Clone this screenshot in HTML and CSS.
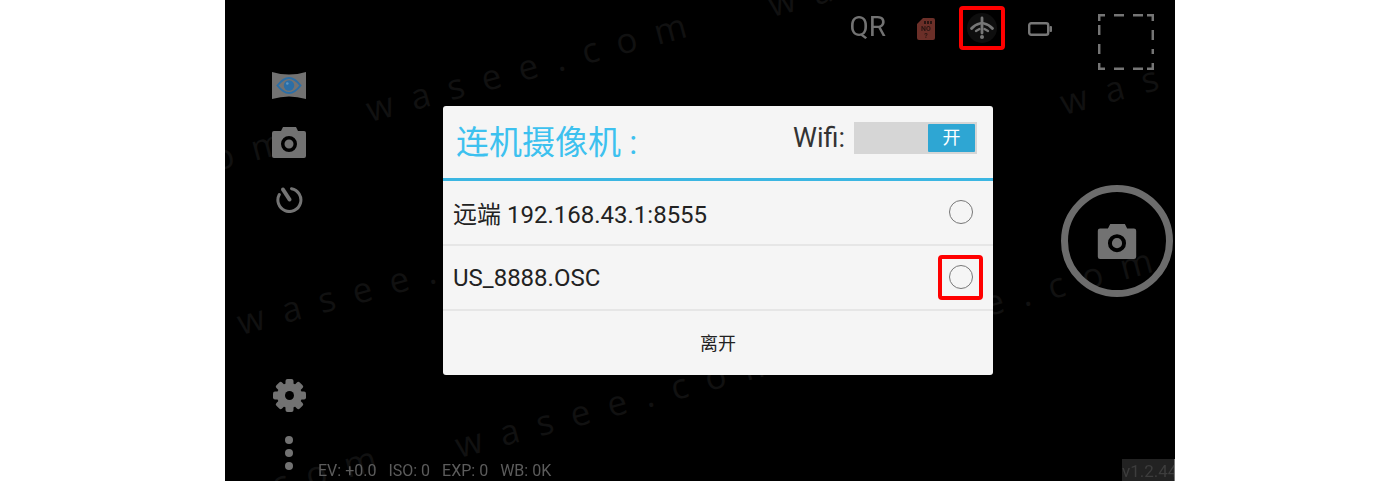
FILE: index.html
```html
<!DOCTYPE html>
<html lang="zh">
<head>
<meta charset="utf-8">
<title>连机摄像机</title>
<link rel="stylesheet" href="styles.css">
</head>
<body>
<div class="screen">
  <span class="wm wm1">wasee.com</span>
  <span class="wm wm2">wasee.com</span>
  <span class="wm wm3">wasee.com</span>
  <span class="wm wm4">wasee.com</span>
  <span class="wm wm5">wasee.com</span>
  <span class="wm wm6">wasee.com</span>
  <span class="wm wm7">wasee.com</span>
  <span class="wm wm8">wasee.com</span>

  <div class="hud">
    <aside class="rail">
      <div class="rail-group">
        <svg class="ic-eye" width="34" height="27" viewBox="0 0 34 27">
          <path fill="#727272" d="M0 0Q17 5 34 0V27Q17 22 0 27Z"/>
          <path fill="none" stroke="#2b6ea6" stroke-width="2" d="M5.500 13.500Q17 -1.500 28.500 13.500Q17 28.500 5.500 13.500Z"/>
          <circle cx="17" cy="13.500" r="5.200" fill="#2b6ea6"/>
          <circle cx="15.300" cy="11.500" r="1.300" fill="#5b93c0"/>
        </svg>
        <svg class="ic-cam" width="34" height="31" viewBox="0 0 34 31">
          <path fill="#727272" fill-rule="evenodd" d="M2 4H9L11 0H24L26 4H32Q34 4 34 6V29Q34 31 32 31H2Q0 31 0 29V6Q0 4 2 4ZM17 9A8 8 0 1 0 17 25A8 8 0 1 0 17 9ZM17 12.500A4.500 4.500 0 1 1 17 21.500A4.500 4.500 0 1 1 17 12.500Z"/>
        </svg>
        <svg class="ic-timer" width="27" height="27" viewBox="0 0 27 27">
          <path fill="none" stroke="#747474" stroke-width="3" stroke-linecap="round" d="M15.500 2.700A11.500 11.500 0 1 1 3.300 8.500"/>
          <path fill="none" stroke="#747474" stroke-width="4" stroke-linecap="round" d="M7 3.500L13.500 13.500"/>
        </svg>
      </div>
      <div class="rail-group rail-low">
        <svg class="ic-gear" width="33" height="33" viewBox="0 0 33 33">
          <g fill="#727272">
            <rect x="12.500" y="0" width="8" height="33" rx="2"/>
            <rect x="12.500" y="0" width="8" height="33" rx="2" transform="rotate(45 16.500 16.500)"/>
            <rect x="12.500" y="0" width="8" height="33" rx="2" transform="rotate(90 16.500 16.500)"/>
            <rect x="12.500" y="0" width="8" height="33" rx="2" transform="rotate(135 16.500 16.500)"/>
            <circle cx="16.500" cy="16.500" r="12.500"/>
          </g>
          <circle cx="16.500" cy="16.500" r="4.500" fill="#000"/>
        </svg>
        <div class="dots"><i></i><i></i><i></i></div>
      </div>
    </aside>

    <main class="main">
      <header class="topbar">
        <span class="qr">QR</span>
        <span class="halo-sim">
          <svg width="18" height="22" viewBox="0 0 18 22">
            <path fill="#6b2f28" d="M6 0H16Q18 0 18 2V20Q18 22 16 22H2Q0 22 0 20V6Z"/>
            <g fill="#2a1512"><rect x="7" y="3" width="2" height="3"/><rect x="10" y="3" width="2" height="3"/><rect x="13" y="3" width="2" height="3"/></g>
            <text class="sim-text" x="9" y="13">NO</text>
            <text class="sim-text" x="9" y="20">?</text>
          </svg>
        </span>
        <span class="alert-frame">
          <svg class="soft" width="30" height="30" viewBox="0 0 30 30">
            <circle cx="15" cy="15" r="15" fill="#0e0e0e"/>
            <path fill="none" stroke="#767676" stroke-width="2.800" stroke-linecap="round" d="M15 5V20"/>
            <path fill="none" stroke="#767676" stroke-width="2.800" stroke-linecap="round" d="M4.500 15.500Q8 11.500 13 10.500M25.500 15.500Q22 11.500 17 10.500"/>
            <path fill="none" stroke="#767676" stroke-width="2.400" stroke-linecap="round" d="M9 18L12.500 16M21 18L17.500 16"/>
            <circle cx="15" cy="24" r="2" fill="#767676"/>
          </svg>
        </span>
        <svg class="battery" width="24" height="14" viewBox="0 0 24 14">
          <rect x="1.200" y="1.200" width="19" height="11.600" rx="2" fill="none" stroke="#767676" stroke-width="2.400"/>
          <rect x="21.500" y="4" width="2.500" height="6" rx="1" fill="#767676"/>
        </svg>
        <svg class="frame-btn" width="56" height="56" viewBox="0 0 56 56">
          <path fill="none" stroke="#757575" stroke-width="2.500" d="M1.200 7V1.200H7M16 1.200H26M35 1.200H45M49 1.200H54.800V7M54.800 16V26M54.800 35V40M54.800 49V54.800H49M45 54.800H35M26 54.800H16M7 54.800H1.200V49M1.200 40V30M1.200 21V11"/>
        </svg>
      </header>

      <div class="mid">
        <button class="shutter" type="button" aria-label="拍照">
          <svg width="40" height="35" viewBox="0 0 34 31">
            <path fill="#727272" fill-rule="evenodd" d="M2 4H9L11 0H24L26 4H32Q34 4 34 6V29Q34 31 32 31H2Q0 31 0 29V6Q0 4 2 4ZM17 9A8 8 0 1 0 17 25A8 8 0 1 0 17 9ZM17 12.500A4.500 4.500 0 1 1 17 21.500A4.500 4.500 0 1 1 17 12.500Z"/>
          </svg>
        </button>
      </div>

      <footer class="status">
        <div class="readouts">
          <span>EV: +0.0</span><span>ISO: 0</span><span>EXP: 0</span><span>WB: 0K</span>
        </div>
        <span class="version">v1.2.44</span>
      </footer>
    </main>
  </div>

  <section class="dialog">
    <div class="dialog-head">
      <h1 class="dialog-title">连机摄像机 :</h1>
      <span class="wifi-label">Wifi:</span>
      <div class="toggle"><span class="toggle-thumb">开</span></div>
    </div>
    <div class="row">
      <span class="row-label">远端 192.168.43.1:8555</span>
      <span class="radio-slot"><i class="radio"></i></span>
    </div>
    <div class="row">
      <span class="row-label row-label-low">US_8888.OSC</span>
      <span class="radio-slot radio-slot-marked"><i class="radio"></i></span>
    </div>
    <div class="dialog-foot">离开</div>
  </section>
</div>
</body>
</html>
```

FILE: styles.css
```css
* { box-sizing: border-box; }

html, body {
  margin: 0;
  height: 100%;
  background: #fff;
  overflow: hidden;
}

body {
  font-family: Roboto, "Noto Sans CJK SC", sans-serif;
}

.screen {
  position: relative;
  width: 950px;
  height: 481px;
  margin-left: 225px;
  background: #000;
  overflow: hidden;
}

/* watermark text on the preview */
.wm {
  position: absolute;
  font-family: "Open Sans", sans-serif;
  font-size: 35px;
  line-height: 1;
  letter-spacing: 18.500px;
  color: #111;
  white-space: nowrap;
  transform: rotate(-15deg);
  transform-origin: 0 100%;
}
.wm1 { left: 146px; top: 91px; }
.wm2 { left: 17px; top: 304px; }
.wm3 { left: 235px; top: 427px; }
.wm4 { left: 548px; top: -14px; }
.wm5 { left: 840px; top: 84px; }
.wm6 { left: -257px; top: 207px; }
.wm7 { left: 612px; top: 326px; }
.wm8 { left: -164px; top: 524px; }

/* the photographed screen is slightly soft */
.rail svg,
.battery,
.frame-btn,
.halo-sim,
.soft,
.shutter,
.qr,
.readouts,
.version {
  filter: blur(0.4px);
}

.hud {
  position: absolute;
  inset: 0;
  display: flex;
}

/* left rail */
.rail {
  width: 93px;
  flex: none;
  padding: 72px 12px 11px 47px;
  display: flex;
  flex-direction: column;
  justify-content: space-between;
  align-items: center;
}
.rail-group {
  display: flex;
  flex-direction: column;
  align-items: center;
  gap: 28px;
}
.rail-group svg { display: block; }
.rail-low { gap: 24px; }

.dots {
  display: flex;
  flex-direction: column;
  gap: 5px;
}
.dots i {
  display: block;
  width: 8px;
  height: 8px;
  border-radius: 50%;
  background: #727272;
}

/* main column */
.main {
  flex: 1;
  min-width: 0;
  display: flex;
  flex-direction: column;
}

.topbar {
  height: 70px;
  flex: none;
  display: flex;
  align-items: flex-start;
  padding-right: 21px;
  justify-content: flex-end;
}
.qr {
  margin-top: 11px;
  font-size: 28px;
  line-height: 32px;
  color: #727272;
}
.halo-sim {
  margin: 18px 0 0 31px;
  width: 18px;
  height: 22px;
  display: block;
}
.halo-sim svg { display: block; }
.sim-text {
  font-family: Roboto, sans-serif;
  font-size: 7px;
  font-weight: 700;
  fill: #2a1512;
  text-anchor: middle;
}
.alert-frame {
  margin: 6px 0 0 24px;
  width: 46px;
  height: 44px;
  border: 4px solid #f00;
  border-radius: 4px;
  display: flex;
  align-items: center;
  justify-content: center;
}
.battery {
  margin: 22px 0 0 23px;
  display: block;
}
.frame-btn {
  margin: 14px 0 0 46px;
  display: block;
}

.mid {
  flex: 1;
  display: flex;
  justify-content: flex-end;
  align-items: flex-start;
  padding: 115px 2px 0 0;
}
.shutter {
  width: 112px;
  height: 112px;
  padding: 0;
  border: 7px solid #6c6c6c;
  border-radius: 50%;
  background: transparent;
  display: flex;
  align-items: center;
  justify-content: center;
}
.shutter svg { display: block; }

.status {
  height: 22px;
  flex: none;
  display: flex;
  justify-content: space-between;
  align-items: flex-end;
}
.readouts {
  display: flex;
  gap: 12px;
  font-size: 16px;
  line-height: 20px;
  color: #5c5c5c;
  white-space: nowrap;
}
.version {
  width: 53px;
  height: 22px;
  background: #222;
  color: #3d3d3d;
  font-size: 17px;
  line-height: 24px;
  white-space: nowrap;
  overflow: hidden;
  border-right: 1px solid #777;
}

/* dialog */
.dialog {
  position: absolute;
  left: 218px;
  top: 106px;
  width: 550px;
  height: 269px;
  background: #f5f5f5;
  border-radius: 3px;
  display: flex;
  flex-direction: column;
  color: #222;
}
.dialog-head {
  height: 75px;
  flex: none;
  display: flex;
  align-items: center;
  padding: 0 16px 8px 13px;
  border-bottom: 3px solid #3bb6e2;
}
.dialog-title {
  flex: 1;
  margin: 10px 0 0;
  font-size: 33px;
  line-height: 40px;
  font-weight: 400;
  color: #3dc1ef;
  white-space: nowrap;
}
.wifi-label {
  font-size: 27px;
  margin-right: 9px;
  color: #333;
}
.toggle {
  width: 123px;
  height: 32px;
  background: #d6d6d6;
  padding: 2px;
  display: flex;
  justify-content: flex-end;
}
.toggle-thumb {
  width: 47px;
  height: 28px;
  background: #2ea6d3;
  border-radius: 1px;
  color: #fff;
  font-size: 18px;
  line-height: 28px;
  text-align: center;
}

.row {
  height: 65px;
  flex: none;
  display: flex;
  align-items: center;
  justify-content: space-between;
  padding: 0 10px 1px 10px;
  border-bottom: 2px solid #e6e6e6;
}
.row-label {
  font-size: 24px;
  color: #222;
  white-space: nowrap;
}
.row-label-low { padding-top: 2px; }
.radio-slot {
  width: 45px;
  height: 45px;
  border: 4px solid transparent;
  border-radius: 4px;
  display: flex;
  align-items: center;
  justify-content: center;
}
.radio-slot-marked { border-color: #f00; }
.radio {
  display: block;
  width: 24px;
  height: 24px;
  border: 1.500px solid #777;
  border-radius: 50%;
}

.dialog-foot {
  flex: 1;
  display: flex;
  align-items: center;
  justify-content: center;
  padding-bottom: 2px;
  font-size: 18px;
  color: #222;
}
```
